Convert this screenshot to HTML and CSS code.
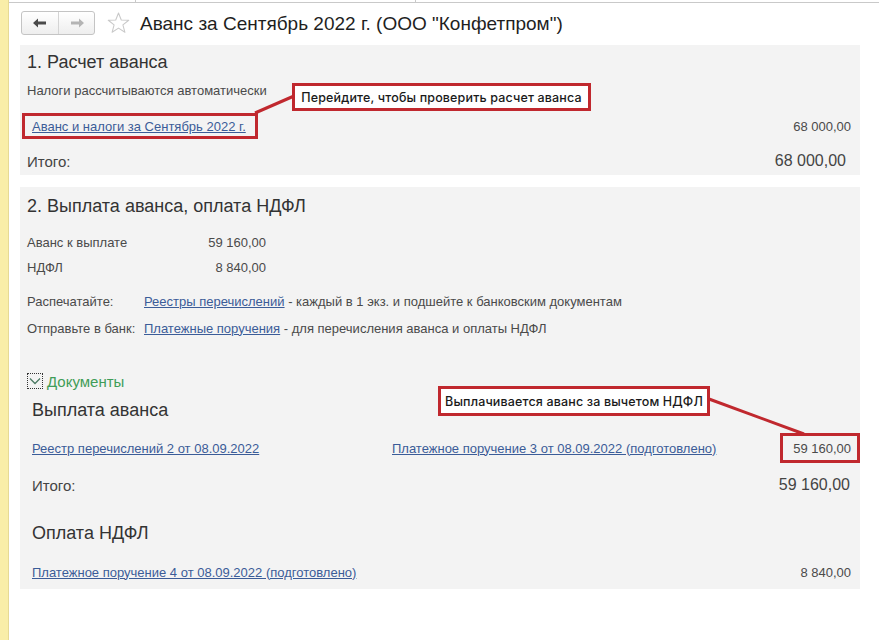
FILE: index.html
```html
<!DOCTYPE html>
<html lang="ru">
<head>
    <meta charset="UTF-8">
    <title>Аванс за Сентябрь 2022 г.</title>
    <link rel="stylesheet" href="styles.css">
</head>
<body>
    <div class="app">
        <div class="side"></div>
        <div class="main">
            <div class="tabs"><span class="tab tab-a"></span><span class="tab tab-b"></span></div>

            <header class="head">
                <div class="nav">
                    <button class="nav-btn">
                        <svg width="14" height="10" viewBox="0 0 14 10"><path d="M0 5 L5 0.5 V3.5 H13 V6.5 H5 V9.5 Z" fill="#4a4a4a"/></svg>
                    </button>
                    <button class="nav-btn">
                        <svg width="14" height="10" viewBox="0 0 14 10"><path d="M14 5 L9 0.5 V3.5 H1 V6.5 H9 V9.5 Z" fill="#b4b4b4"/></svg>
                    </button>
                </div>
                <svg class="star" width="23" height="22" viewBox="0 0 24 23">
                    <path d="M12 1 L14.9 8.3 L22.7 8.6 L16.6 13.5 L18.7 21.2 L12 16.8 L5.3 21.2 L7.4 13.5 L1.3 8.6 L9.1 8.3 Z" fill="none" stroke="#c9c9c9" stroke-width="1.1" stroke-linejoin="round"/>
                </svg>
                <h1 class="title">Аванс за Сентябрь 2022 г. (ООО "Конфетпром")</h1>
            </header>

            <section class="panel calc">
                <h2 class="panel-title">1. Расчет аванса</h2>
                <div class="note">Налоги рассчитываются автоматически</div>
                <div class="row link-row">
                    <span class="mark mark-link"><a href="#">Аванс и налоги за Сентябрь 2022 г.</a></span>
                    <span class="sum">68 000,00</span>
                </div>
                <div class="row total">
                    <span>Итого:</span>
                    <span class="sum big">68 000,00</span>
                </div>
            </section>

            <section class="panel pay">
                <h2 class="panel-title">2. Выплата аванса, оплата НДФЛ</h2>
                <div class="amounts">
                    <span>Аванс к выплате</span><span class="num">59 160,00</span>
                    <span>НДФЛ</span><span class="num">8 840,00</span>
                </div>
                <div class="steps">
                    <span>Распечатайте:</span>
                    <span><a href="#">Реестры перечислений</a> - каждый в 1 экз. и подшейте к банковским документам</span>
                    <span>Отправьте в банк:</span>
                    <span><a href="#">Платежные поручения</a> - для перечисления аванса и оплаты НДФЛ</span>
                </div>

                <div class="group-toggle">
                    <span class="toggle-box">
                        <svg width="12" height="8" viewBox="0 0 12 8"><path d="M1 1.5 L6 6.5 L11 1.5" fill="none" stroke="#4b7a63" stroke-width="1.3"/></svg>
                    </span>
                    <span class="group-name">Документы</span>
                </div>

                <div class="sub">
                    <h3 class="sub-title">Выплата аванса</h3>
                    <div class="row doc-row">
                        <a href="#" class="doc-first">Реестр перечислений 2 от 08.09.2022</a>
                        <a href="#">Платежное поручение 3 от 08.09.2022 (подготовлено)</a>
                        <span class="mark mark-sum">59 160,00</span>
                    </div>
                    <div class="row total">
                        <span>Итого:</span>
                        <span class="sum big">59 160,00</span>
                    </div>

                    <h3 class="sub-title ndfl">Оплата НДФЛ</h3>
                    <div class="row ndfl-row">
                        <a href="#">Платежное поручение 4 от 08.09.2022 (подготовлено)</a>
                        <span class="sum">8 840,00</span>
                    </div>
                </div>
            </section>
        </div>
    </div>

    <!-- annotations drawn over the form -->
    <div class="callout callout-calc">Перейдите, чтобы проверить расчет аванса</div>
    <div class="callout callout-pay">Выплачивается аванс за вычетом НДФЛ</div>
    <svg class="leaders" width="879" height="640">
        <line x1="294" y1="96" x2="255" y2="113" stroke="#c0282e" stroke-width="3"/>
        <line x1="709" y1="399" x2="804" y2="434" stroke="#c0282e" stroke-width="3"/>
    </svg>
</body>
</html>
```

FILE: styles.css
```css
body {
    margin: 0;
    font-family: "Liberation Sans", Arial, sans-serif;
    font-size: 13px;
    color: #4a4a4a;
    background: #fff;
}
a {
    color: #3b5c98;
    text-decoration: underline;
}
.app {
    display: flex;
    min-height: 640px;
}
.side {
    width: 8px;
    flex: none;
    background: #f9eea8;
    border-right: 1px solid #e6da95;
}
.main {
    flex: 1;
}
.tabs {
    height: 2px;
    border-bottom: 1px solid #c9c9c9;
    position: relative;
}
.tab {
    position: absolute;
    top: 0;
    height: 2px;
    border-left: 1px solid #c9c9c9;
}
.tab-a { left: 126px; }
.tab-b { left: 406px; }
.head {
    height: 42px;
    display: flex;
    align-items: center;
    padding-left: 12px;
}
.nav {
    display: flex;
    height: 24px;
    border: 1px solid #c4c4c4;
    border-radius: 3px;
    box-sizing: border-box;
    background: linear-gradient(#ffffff, #eeeeee);
    margin-top: -2px;
}
.nav-btn {
    width: 36px;
    border: none;
    background: none;
    padding: 0;
    display: flex;
    align-items: center;
    justify-content: center;
}
.nav-btn + .nav-btn {
    border-left: 1px solid #d4d4d4;
}
.star {
    margin-left: 12px;
    margin-top: -2px;
}
.title {
    margin: 0 0 0 10px;
    font-size: 19px;
    font-weight: normal;
    color: #1f1f1f;
}
.panel {
    background: #f3f3f3;
    margin: 0 19px 12px 11px;
    padding: 6px 9px 3px 7px;
}
.panel-title {
    margin: 0;
    height: 22px;
    line-height: 22px;
    font-size: 18px;
    font-weight: normal;
    color: #333;
}
.note {
    margin-top: 9px;
    height: 18px;
    line-height: 18px;
}
.row {
    display: flex;
    align-items: center;
    justify-content: space-between;
}
.link-row {
    margin-top: 13px;
    height: 26px;
}
.mark {
    border: 3px solid #c0282e;
    box-sizing: border-box;
    display: flex;
    align-items: center;
}
.mark-link {
    height: 26px;
    margin-left: -5px;
    padding: 0 9px 0 7px;
}
.total {
    height: 22px;
    margin-top: 11px;
    font-size: 15px;
    color: #444;
}
.big {
    font-size: 16px;
    margin-right: 5px;
}
.pay {
    padding-top: 8px;
    padding-bottom: 8px;
}
.amounts {
    display: grid;
    grid-template-columns: 150px 89px;
    grid-auto-rows: 18px;
    row-gap: 7px;
    margin-top: 16px;
    align-items: center;
}
.num {
    text-align: right;
}
.steps {
    display: grid;
    grid-template-columns: 117px auto;
    grid-auto-rows: 18px;
    row-gap: 9px;
    margin-top: 16px;
    align-items: center;
}
.group-toggle {
    display: flex;
    align-items: center;
    height: 18px;
    margin-top: 35px;
}
.toggle-box {
    width: 16px;
    height: 16px;
    box-sizing: border-box;
    border: 1px dotted #333;
    display: flex;
    align-items: center;
    justify-content: center;
}
.group-name {
    margin-left: 4px;
    font-size: 15px;
    color: #3f9d58;
}
.sub {
    padding-left: 5px;
}
.sub-title {
    margin: 9px 0 0;
    height: 22px;
    line-height: 22px;
    font-size: 18px;
    font-weight: normal;
    color: #333;
}
.doc-row {
    margin-top: 12px;
    height: 30px;
    justify-content: flex-start;
}
.doc-first {
    width: 360px;
}
.mark-sum {
    margin-left: auto;
    margin-right: -9px;
    width: 80px;
    height: 30px;
    justify-content: flex-end;
    padding-right: 6px;
}
.pay .big {
    margin-right: 1px;
}
.sub-title.ndfl {
    margin-top: 26px;
}
.ndfl-row {
    margin-top: 19px;
    height: 18px;
}
.callout {
    position: absolute;
    box-sizing: border-box;
    border: 3px solid #c0282e;
    background: #fff;
    font-family: Inter, "Noto Sans", sans-serif;
    font-size: 12.5px;
    font-weight: 500;
    letter-spacing: 0.15px;
    color: #1a1a1a;
    display: flex;
    align-items: center;
    justify-content: center;
}
.callout-calc {
    left: 292px;
    top: 83px;
    width: 299px;
    height: 28px;
}
.callout-pay {
    left: 438px;
    top: 386px;
    width: 272px;
    height: 30px;
}
.leaders {
    position: absolute;
    left: 0;
    top: 0;
    pointer-events: none;
}
```
